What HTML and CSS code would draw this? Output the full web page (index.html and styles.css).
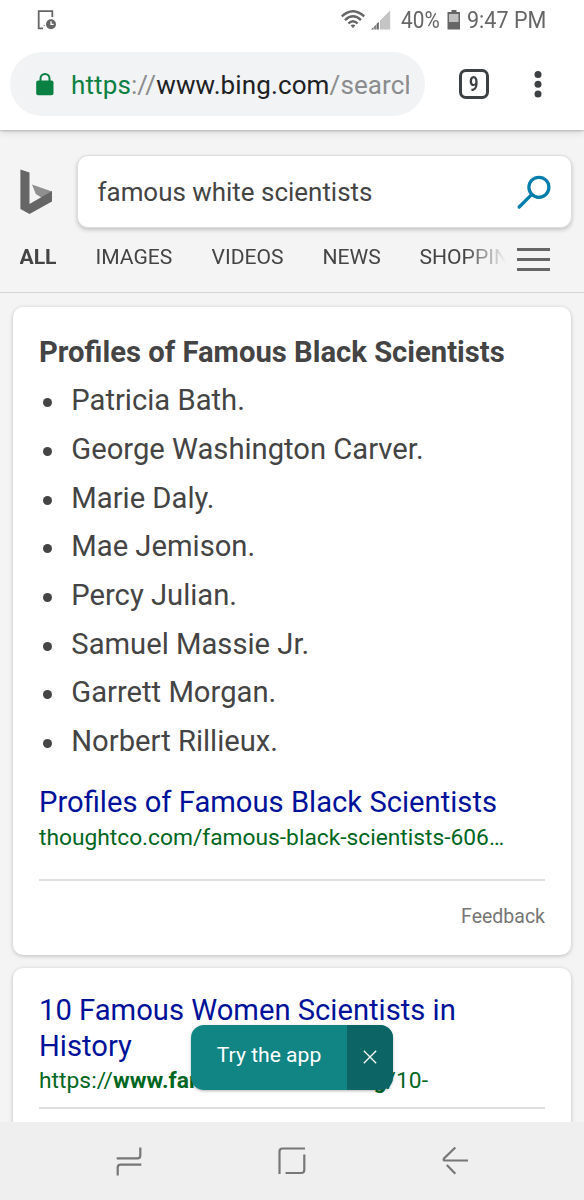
FILE: index.html
```html
<!DOCTYPE html>
<html lang="en">
<head>
<meta charset="utf-8">
<title>famous white scientists - Bing</title>
<link rel="stylesheet" href="styles.css">
</head>
<body>
<div class="phone">
  <header class="chrome">
    <div class="status">
      <svg class="status-doc" width="20" height="20" viewBox="0 0 20 20"><path d="M15.300 7V1.200H1.700V18.300H6" fill="none" stroke="#666" stroke-width="1.800"/><circle cx="7.200" cy="15.300" r=".6" fill="#666"/><circle cx="14" cy="14.300" r="5" fill="#666"/><path d="M14 11.300v3h2.700" fill="none" stroke="#fff" stroke-width="1.300"/></svg>
      <div class="status-right">
        <svg class="wifi" width="24" height="19" viewBox="0 0 24 19" fill="none" stroke="#666" stroke-width="2.400"><path d="M.8 6.300Q12-3.800 23.200 6.300M4 10.100Q12 2.600 20 10.100M7.400 13.500Q12 9 16.600 13.500"/><path d="M9.600 15.300Q12 13.500 14.400 15.300L12 18.200Z" fill="#666" stroke="none"/></svg>
        <svg class="signal" width="20" height="20" viewBox="0 0 20 20"><path d="M9 10.500L19.200.5V19.500H9Z" fill="#c4c4c4"/><path d="M0 19.500L2.500 17V19.500ZM3.300 16.300L4.800 14.800V19.500H3.300ZM5.500 14L7.800 11.700V19.500H5.500Z" fill="#666"/></svg>
        <span class="status-text pct">40%</span>
        <svg class="battery" width="14" height="20" viewBox="0 0 14 20"><path d="M4.500 0h5v2H13V19.500H.5V2h4Z" fill="#666"/><path d="M2 4h9.500v8H2Z" fill="#c0c0c0"/></svg>
        <span class="status-text clock">9:47 PM</span>
      </div>
    </div>
    <div class="address-row">
      <div class="omnibox">
        <svg class="lock" width="18" height="24" viewBox="0 0 18 24"><path d="M4.500 9V6.500a4.500 4.500 0 0 1 9 0V9" fill="none" stroke="#0b8043" stroke-width="2"/><rect x=".2" y="8.500" width="17.300" height="14.700" rx="2" fill="#0b8043"/></svg>
        <div class="url"><span class="secure">https</span><span class="dim">://</span>www.bing.com<span class="dim">/search</span></div>
      </div>
      <div class="tabs"><span>9</span></div>
      <svg class="dots" width="8" height="28" viewBox="0 0 8 28" fill="#3c4043"><circle cx="4" cy="4.400" r="3.500"/><circle cx="4" cy="14.200" r="3.500"/><circle cx="4" cy="24" r="3.500"/></svg>
    </div>
  </header>

  <section class="search-head">
    <div class="search-row">
      <svg class="bing" width="33" height="46" viewBox="0 0 33 46"><path d="M12 15.500L32 22.500L26 28L20.500 28L15.800 25Z" fill="#8f8f8f"/><path d="M.4.500L9.500 3.500V35L32 22V32.500L9.500 45L.4 39.900Z" fill="#666"/></svg>
      <div class="search-box"><span>famous white scientists</span>
        <svg width="34" height="34" viewBox="0 0 34 34" fill="none" stroke="#007daa" stroke-width="3.200"><circle cx="21.900" cy="12.300" r="10"/><path d="M14.600 19.600L2.200 32" stroke-linecap="round"/></svg>
      </div>
    </div>
    <nav class="scopes">
      <div class="scope-list"><b class="s-all">ALL</b><span class="s-images">IMAGES</span><span class="s-videos">VIDEOS</span><span class="s-news">NEWS</span><span>SHOPPING</span></div>
      <div class="menu"><i></i><i></i><i></i></div>
    </nav>
  </section>

  <main class="results">
    <article class="card answer">
      <h2>Profiles of Famous Black Scientists</h2>
      <ul>
        <li>Patricia Bath.</li>
        <li>George Washington Carver.</li>
        <li>Marie Daly.</li>
        <li>Mae Jemison.</li>
        <li>Percy Julian.</li>
        <li>Samuel Massie Jr.</li>
        <li>Garrett Morgan.</li>
        <li>Norbert Rillieux.</li>
      </ul>
      <a class="title">Profiles of Famous Black Scientists</a>
      <div class="cite">thoughtco.com/famous-black-scientists-606…</div>
      <div class="feedback">Feedback</div>
    </article>
    <article class="card next">
      <a class="title">10 Famous Women Scientists in<br>History</a>
      <div class="cite cite-next">https://<b>www.famousscientists.org</b>/10-</div>
    </article>
    <div class="app-pill"><span class="try">Try the app</span><span class="close"><svg width="14" height="14" viewBox="0 0 14 14"><path d="M.8.800L13.200 13.200M13.200.800L.8 13.200" stroke="#fff" stroke-width="1.300"/></svg></span></div>
  </main>

  <footer class="softkeys">
    <svg width="26" height="30" viewBox="0 0 26 30"><path d="M.7 12.300H21.500Q24.300 12.300 24.300 9.500V1.500M25.300 18.700H4.500Q1.700 18.700 1.700 21.500V29.500"/></svg>
    <svg width="28" height="28" viewBox="0 0 28 28"><path d="M1.500 27V4.500Q1.500 1.500 4.500 1.500H27M26.300 7.500V23Q26.300 26 23.300 26H7.500"/></svg>
    <svg width="26" height="30" viewBox="0 0 26 30"><path d="M13.300 1.500L2 12.500Q1 14.500 2.500 14.500H26M4.800 19L13.300 27.800"/></svg>
  </footer>
</div>
</body>
</html>
```
FILE: styles.css
```css
* { box-sizing: border-box; }
body { margin: 0; font-family: Roboto, "Liberation Sans", sans-serif; color: #444; background: #f4f4f4; }
svg { display: block; flex: none; }
.phone { width: 584px; height: 1200px; display: flex; flex-direction: column; overflow: hidden; }
.chrome { height: 130px; flex: none; background: #fff; box-shadow: 0 1px 2px rgba(0,0,0,.2), 0 2px 8px rgba(0,0,0,.13); }
.status { height: 40px; display: flex; justify-content: space-between; padding: 0 38px 0 37px; }
.status-doc { margin-top: 10px; }
.status-right { display: flex; align-items: flex-start; }
.wifi { margin-top: 10px; }
.signal { margin: 10px 10px 0 6px; }
.battery { margin: 10px 6px 0 8px; }
.status-text { font-size: 24.500px; line-height: 40px; color: #666; white-space: nowrap; transform-origin: left; }
.pct { width: 38px; transform: scaleX(.85); }
.clock { width: 79px; transform: scaleX(.88); }
.address-row { display: flex; align-items: center; padding: 0 42px 0 10px; margin-top: 12px; height: 64px; }
.omnibox { width: 415px; height: 64px; border-radius: 32px; background: #f1f3f4; display: flex; align-items: center; padding: 0 16px 0 26px; }
.lock { margin-right: 17px; }
.url { flex: 1; overflow: hidden; white-space: nowrap; font-size: 26px; letter-spacing: .12px; line-height: 40px; color: #202124; padding-top: 2px; }
.secure { color: #0b8043; }
.dim { color: #8a8c8e; }
.tabs { width: 30px; height: 30px; margin-left: 34px; border: 3px solid #3c4043; border-radius: 7px; font-size: 20px; font-weight: 700; line-height: 25px; text-align: center; color: #3c4043; }
.tabs span { display: inline-block; transform: scaleX(.82); }
.dots { margin-left: 45px; }
.search-head { height: 163px; flex: none; border-bottom: 1px solid #d6d6d6; padding-top: 25px; }
.search-row { display: flex; align-items: center; padding: 0 12px 0 20px; }
.search-box { width: 495px; height: 73px; margin-left: 24px; background: #fff; border: 1px solid #ddd; border-radius: 11px; box-shadow: 0 2px 4px rgba(0,0,0,.2); display: flex; align-items: center; justify-content: space-between; padding: 0 20px 0 19.500px; font-size: 25.950px; }
.bing { margin-top: 1px; }
.scopes { display: flex; align-items: center; padding: 0 34px 0 19.500px; height: 58px; }
.scope-list { width: 486.500px; display: flex; overflow: hidden; font-size: 21.100px; line-height: 30px; white-space: nowrap; -webkit-mask-image: linear-gradient(90deg, #000 445px, transparent 486px); mask-image: linear-gradient(90deg, #000 445px, transparent 486px); }
.scope-list > * { flex: none; }
.s-all { width: 76px; }
.s-images { width: 116px; }
.s-videos { width: 111px; }
.s-news { width: 97px; }
.menu { margin: 5px 0 0 11px; display: flex; flex-direction: column; gap: 7px; }
.menu i { width: 33px; height: 3px; background: #666; }
.results { position: relative; height: 829px; flex: none; overflow: hidden; padding: 14px 13px 0; }
.card { background: #fff; border-radius: 10px; box-shadow: 0 1px 4px rgba(0,0,0,.23); padding: 0 26px; }
.answer { height: 648px; padding-top: 25px; }
h2 { margin: 0; font-size: 29.230px; line-height: 40px; font-weight: 700; white-space: nowrap; }
ul { margin: 4px 0 0; padding: 0; list-style: none; }
li { display: flex; align-items: center; height: 48.670px; font-size: 29.200px; }
li::before { content: ""; width: 9px; height: 9px; border-radius: 50%; background: #444; margin: 5px 19px 0 4.300px; }
.title { display: block; color: #001199; font-size: 29.200px; line-height: 36px; white-space: nowrap; }
.answer .title { margin-top: 19px; }
.cite { color: #006621; font-size: 22.750px; line-height: 34px; white-space: nowrap; }
.answer .cite { padding-top: 1px; }
.feedback { margin-top: 24px; border-top: 2px solid #e0e0e0; padding-top: 21px; text-align: right; font-size: 19.500px; line-height: 30px; color: #767676; }
.next { height: 210px; margin-top: 13px; padding-top: 24px; }
.cite-next { height: 45px; border-bottom: 2px solid #e0e0e0; letter-spacing: .04px; }
.app-pill { position: absolute; left: 191px; top: 732px; width: 202px; height: 65px; border-radius: 13px; overflow: hidden; display: flex; color: #fff; background: #118484; box-shadow: 0 1px 3px rgba(0,0,0,.3); }
.try { width: 156px; font-size: 21.100px; line-height: 60px; text-align: center; }
.close { flex: 1; background: #0c6464; display: flex; align-items: center; justify-content: center; padding-bottom: 1px; }
.softkeys { flex: 1; background: #efefef; display: flex; align-items: center; justify-content: space-between; padding: 0 116px; }
.softkeys path { fill: none; stroke: #777; stroke-width: 2.200; }
```
